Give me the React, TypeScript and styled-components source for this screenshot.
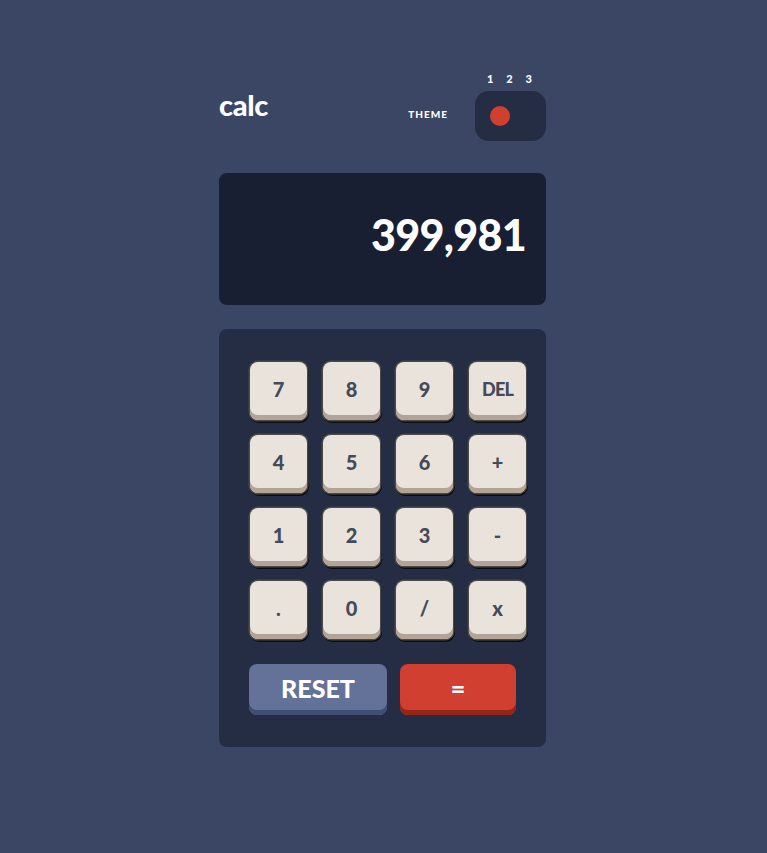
import styled, { createGlobalStyle } from "styled-components";

const GlobalStyle = createGlobalStyle`
  html, body {
    margin: 0;
    padding: 0;
    background-color: #3b4664;
    font-family: "Lato", "Noto Sans", sans-serif;
  }
`;

const Page = styled.main`
  min-height: 853px;
  display: flex;
  justify-content: center;
  padding: 73px 2px 0 0;
  box-sizing: border-box;
`;

const Calculator = styled.div`
  width: 327px;
  display: flex;
  flex-direction: column;
`;

const Header = styled.header`
  display: flex;
  align-items: flex-end;
  justify-content: space-between;
`;

const Logo = styled.h1`
  margin: 0 0 22px 0;
  color: #ffffff;
  font-size: 29px;
  font-weight: 900;
  letter-spacing: -0.3px;
  line-height: 1;
`;

const ThemeArea = styled.div`
  display: flex;
  align-items: flex-end;
  gap: 27px;
`;

const ThemeLabel = styled.span`
  color: #ffffff;
  font-size: 10px;
  font-weight: 900;
  letter-spacing: 1px;
  margin-bottom: 21px;
`;

const Switcher = styled.div`
  display: flex;
  flex-direction: column;
  gap: 7px;
`;

const Numbers = styled.div`
  display: flex;
  justify-content: space-between;
  padding: 0 14px 0 12px;
  color: #ffffff;
  font-size: 11px;
  font-weight: 900;
  line-height: 11px;
`;

const Track = styled.div`
  width: 71px;
  height: 50px;
  border-radius: 14px;
  background-color: #252d44;
  display: flex;
  align-items: center;
  padding-left: 15px;
  box-sizing: border-box;
`;

const Dot = styled.span`
  width: 20px;
  height: 20px;
  border-radius: 50%;
  background-color: #d03f2f;
`;

const Screen = styled.div`
  margin-top: 32px;
  height: 132px;
  border-radius: 8px;
  background-color: #181f33;
  display: flex;
  align-items: center;
  justify-content: flex-end;
  padding-right: 20px;
  box-sizing: border-box;
`;

const ScreenValue = styled.span`
  color: #ffffff;
  font-size: 43px;
  font-weight: 900;
  letter-spacing: -0.7px;
  margin-top: -10px;
`;

const Keypad = styled.div`
  margin-top: 24px;
  background-color: #252d44;
  border-radius: 8px;
  padding: 33px 18px 32px 30px;
  display: flex;
  flex-direction: column;
  gap: 25px;
`;

const KeyGrid = styled.div`
  display: grid;
  grid-template-columns: repeat(4, 57px);
  grid-auto-rows: 58px;
  column-gap: 16px;
  row-gap: 15px;
  padding-left: 1px;
`;

const Key = styled.button`
  border: none;
  margin: 0;
  padding: 0 0 4px 0;
  border-radius: 8px;
  background-color: #eae3dc;
  color: #434a59;
  font-family: "Lato", "Noto Sans", sans-serif;
  font-weight: 900;
  box-shadow: inset 0 -5px 0 #b3a497, 0 0 0 1.5px #4a4a4a, 1px 2px 0 1px #0d0d0d;
  cursor: pointer;
`;

const KeyText = styled.span<{ $small?: boolean }>`
  font-size: ${(p) => (p.$small ? "18px" : "20px")};
  letter-spacing: ${(p) => (p.$small ? "-0.8px" : "0")};
`;

const ActionRow = styled.div`
  display: flex;
  gap: 13px;
`;

const ActionButton = styled.button<{ $variant: "reset" | "equal" }>`
  border: none;
  margin: 0;
  padding: 0 0 4px 0;
  height: 51px;
  width: ${(p) => (p.$variant === "reset" ? "138px" : "116px")};
  border-radius: 8px;
  color: #ffffff;
  font-family: "Lato", "Noto Sans", sans-serif;
  font-size: 25px;
  font-weight: 900;
  background-color: ${(p) => (p.$variant === "reset" ? "#647198" : "#d03f2f")};
  box-shadow: inset 0 -5px 0 ${(p) => (p.$variant === "reset" ? "#414e73" : "#93261a")};
  cursor: pointer;
`;

const keys = ["7", "8", "9", "DEL", "4", "5", "6", "+", "1", "2", "3", "-", ".", "0", "/", "x"];

export default function App() {
  return (
    <>
      <GlobalStyle />
      <Page>
        <Calculator>
          <Header>
            <Logo>calc</Logo>
            <ThemeArea>
              <ThemeLabel>THEME</ThemeLabel>
              <Switcher>
                <Numbers>
                  <span>1</span>
                  <span>2</span>
                  <span>3</span>
                </Numbers>
                <Track>
                  <Dot />
                </Track>
              </Switcher>
            </ThemeArea>
          </Header>

          <Screen>
            <ScreenValue>399,981</ScreenValue>
          </Screen>

          <Keypad>
            <KeyGrid>
              {keys.map((k) => (
                <Key key={k}>
                  <KeyText $small={k === "DEL"}>{k}</KeyText>
                </Key>
              ))}
            </KeyGrid>
            <ActionRow>
              <ActionButton $variant="reset">RESET</ActionButton>
              <ActionButton $variant="equal">=</ActionButton>
            </ActionRow>
          </Keypad>
        </Calculator>
      </Page>
    </>
  );
}
